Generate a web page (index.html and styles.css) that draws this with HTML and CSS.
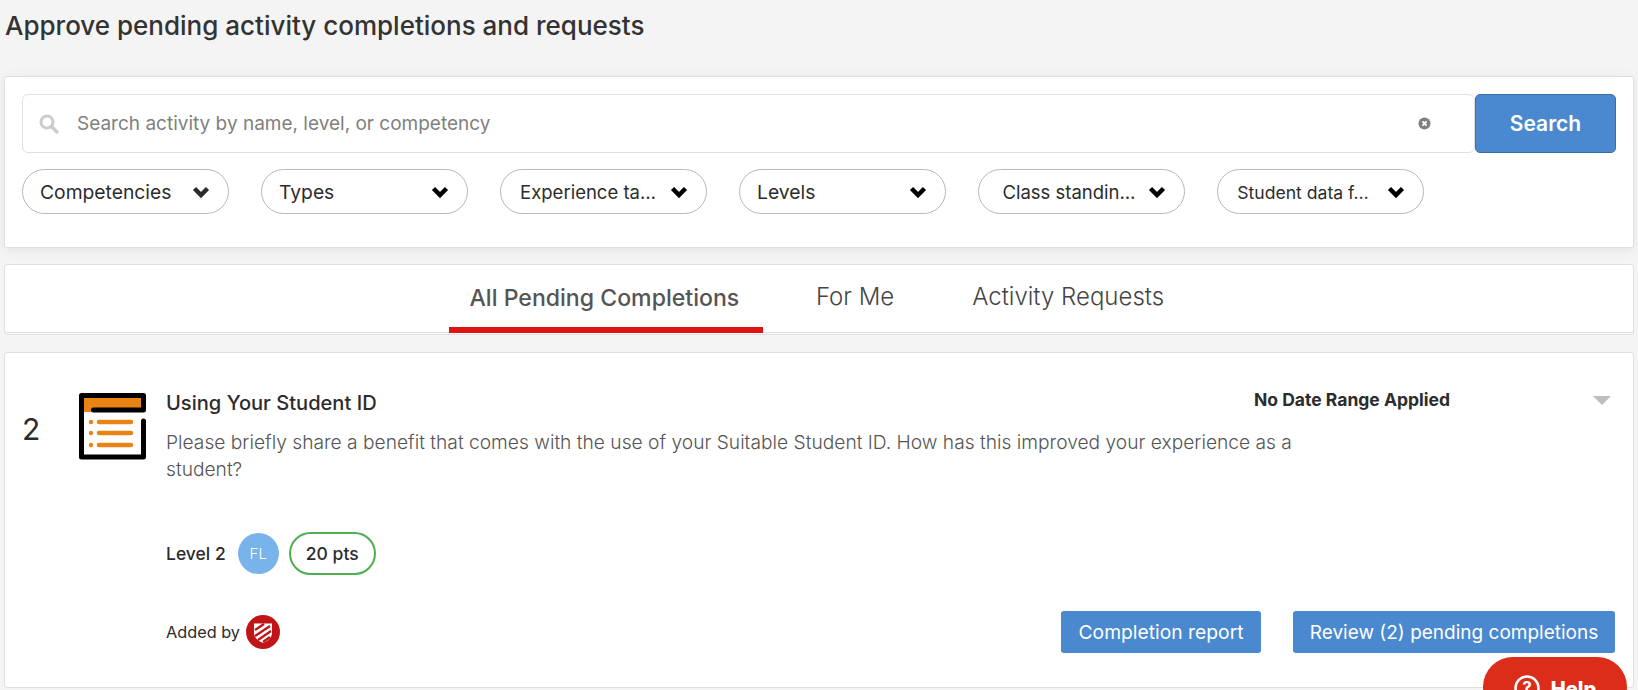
FILE: index.html
```html
<!DOCTYPE html>
<html lang="en">
<head>
<meta charset="utf-8">
<title>Approve pending activity completions and requests</title>
<link rel="stylesheet" href="styles.css">
</head>
<body>
<h1 class="page-title">Approve pending activity completions and requests</h1>
<section class="panel filters">
  <div class="search-row">
    <div class="search-box">
      <svg class="search-icon" viewBox="0 0 20 20"><circle cx="8" cy="8" r="6" fill="none" stroke="#ccc" stroke-width="3"/><path d="M12.5 12.5L18 18" stroke="#ccc" stroke-width="3.4" stroke-linecap="round"/></svg>
      <span class="placeholder">Search activity by name, level, or competency</span>
      <svg class="clear-icon" viewBox="0 0 14 14"><circle cx="7" cy="7" r="6.5" fill="#808080"/><path d="M4.8 4.8l4.4 4.4M9.2 4.8l-4.4 4.4" stroke="#fff" stroke-width="2"/></svg>
    </div>
    <button class="search-btn">Search</button>
  </div>
  <div class="pill-row">
    <div class="pill"><span class="pill-text">Competencies</span><svg class="chev" viewBox="0 0 18 12"><path d="M2.500 2.500L9 9l6.500-6.500" fill="none" stroke="#2b2b2b" stroke-width="4.500"/></svg></div>
    <div class="pill"><span class="pill-text">Types</span><svg class="chev" viewBox="0 0 18 12"><path d="M2.500 2.500L9 9l6.500-6.500" fill="none" stroke="#000" stroke-width="4.500"/></svg></div>
    <div class="pill"><span class="pill-text trunc trunc-left">Experience ta…</span><svg class="chev" viewBox="0 0 18 12"><path d="M2.500 2.500L9 9l6.500-6.500" fill="none" stroke="#000" stroke-width="4.500"/></svg></div>
    <div class="pill"><span class="pill-text">Levels</span><svg class="chev" viewBox="0 0 18 12"><path d="M2.500 2.500L9 9l6.500-6.500" fill="none" stroke="#000" stroke-width="4.500"/></svg></div>
    <div class="pill"><span class="pill-text trunc">Class standin…</span><svg class="chev" viewBox="0 0 18 12"><path d="M2.500 2.500L9 9l6.500-6.500" fill="none" stroke="#000" stroke-width="4.500"/></svg></div>
    <div class="pill"><span class="pill-text trunc trunc-left trunc-small">Student data f…</span><svg class="chev" viewBox="0 0 18 12"><path d="M2.500 2.500L9 9l6.500-6.500" fill="none" stroke="#000" stroke-width="4.500"/></svg></div>
  </div>
</section>
<nav class="panel tabs">
  <div class="tab active">All Pending Completions</div>
  <div class="tab">For Me</div>
  <div class="tab">Activity Requests</div>
</nav>
<section class="panel item">
  <div class="count">2</div>
  <svg class="activity-icon" viewBox="0 0 67 67">
    <path d="M5 5H62V15H13V19H5Z" fill="#ea8316"/>
    <path d="M14.500 17H64.500V2.500H2.500V64H64.500V28" fill="none" stroke="#000" stroke-width="5" stroke-linecap="round" stroke-linejoin="round"/>
    <circle cx="12" cy="29" r="2.200" fill="#ea8316"/><circle cx="12" cy="40" r="2.200" fill="#ea8316"/><circle cx="12" cy="52" r="2.200" fill="#ea8316"/>
    <path d="M20 29H52M20 40H52M20 52H52" stroke="#ea8316" stroke-width="4.500" stroke-linecap="round"/>
  </svg>
  <div class="item-body">
    <div class="item-head">
      <h2 class="item-title">Using Your Student ID</h2>
      <div class="date-range">No Date Range Applied</div>
      <div class="caret"></div>
    </div>
    <p class="item-desc">Please briefly share a benefit that comes with the use of your Suitable Student ID. How has this improved your experience as a student?</p>
    <div class="meta">
      <span class="level">Level 2</span>
      <span class="avatar">FL</span>
      <span class="points">20 pts</span>
    </div>
    <div class="foot">
      <span class="added">Added by</span>
      <svg class="badge" viewBox="0 0 34 34"><circle cx="17" cy="17" r="17" fill="#c01516"/><path d="M8 8.500H26V18C26 23 21 26.500 17 28C13 26.500 8 23 8 18Z" fill="#fff"/><path d="M9 15L18 9M9 21L24 11M12 25L25 16M17 27L24 22" stroke="#c01516" stroke-width="2.200"/></svg>
      <div class="actions">
        <button class="action action-report">Completion report</button>
        <button class="action action-review">Review (2) pending completions</button>
      </div>
    </div>
  </div>
</section>
<div class="help"><svg class="help-icon" viewBox="0 0 26 26"><circle cx="13" cy="13" r="11.500" fill="none" stroke="#fff" stroke-width="2.500"/><text x="13" y="19" text-anchor="middle" class="help-q">?</text></svg><span class="help-label">Help</span></div>
</body>
</html>
```
FILE: styles.css
```css
* { box-sizing: border-box; }
html, body { height: 100%; }
body {
  margin: 0;
  padding: 0 4px;
  background: #f4f4f4;
  font-family: "Inter", "Lato", sans-serif;
  color: #2c2c2c;
  overflow: hidden;
  position: relative;
}
.page-title {
  margin: 0;
  height: 76px;
  padding: 9px 0 0 1px;
  font-size: 26px;
  line-height: 34px;
  font-weight: 500;
  color: #333;
}
.panel {
  background: #fff;
  border: 1px solid #e0e0e0;
  border-radius: 3px;
}
.filters {
  height: 172px;
  padding: 17px 17px 0;
  box-shadow: 0 2px 12px rgba(0,0,0,.07);
  margin-bottom: 16px;
}
.search-row { display: flex; height: 59px; }
.search-box {
  flex: 1;
  display: flex;
  align-items: center;
  border: 1px solid #e0e0e0;
  border-radius: 6px;
  padding: 0 43px 0 16px;
}
.search-icon { width: 20px; height: 20px; margin-right: 18px; }
.placeholder { flex: 1; font-size: 19px; color: #808080; }
.clear-icon { width: 13px; height: 13px; }
.search-btn {
  width: 141px;
  border: 1px solid #3a6ea5;
  border-radius: 5px;
  background: #4a89cf;
  color: #fff;
  font: 600 21px "Inter", sans-serif;
}
.pill-row { display: flex; gap: 32px; margin-top: 16px; }
.pill {
  width: 207px;
  height: 45px;
  display: flex;
  align-items: center;
  justify-content: space-between;
  padding: 1px 18px 0 17px;
  border: 1px solid #b8b8b8;
  border-radius: 23px;
}
.pill-text { font-size: 19.300px; color: #2c2c2c; white-space: nowrap; }
.pill-text.trunc { font-size: 18.500px; flex: 1; text-align: center; padding-right: 6px; }
.pill-text.trunc-left { padding-right: 12px; }
.pill-text.trunc-small { font-size: 17.600px; padding-right: 16px; }
.chev { width: 18px; height: 12px; flex: none; }
.tabs {
  height: 71px;
  display: flex;
  justify-content: center;
  margin-bottom: 17px;
  padding-left: 14px;
  box-shadow: inset 0 -1px 0 #fff, inset 0 -2px 0 #ddd;
}
.tab {
  height: 62px;
  padding: 0 39px;
  display: flex;
  align-items: center;
  justify-content: center;
  font-size: 24px;
  font-weight: 300;
  color: #444;
  white-space: nowrap;
}
.tab.active {
  width: 314px;
  padding: 4px 3px 0 0;
  font-size: 23.100px;
  font-weight: 500;
  color: #555;
  height: 68px;
  border-bottom: 6px solid #dc1414;
  margin-right: 14px;
}
.item {
  height: 336px;
  display: flex;
  align-items: flex-start;
  padding: 37px 17px 0;
}
.count { width: 57px; font-size: 30px; line-height: 36px; margin-top: 21px; }
.activity-icon { width: 67px; height: 67px; flex: none; margin: 3px 20px 0 0; }
.item-body { flex: 1; min-width: 0; }
.item-head { display: flex; align-items: flex-start; height: 26px; }
.item-title { margin: 0; flex: 1; font-size: 20.100px; line-height: 26px; font-weight: 500; color: #2c2c2c; }
.date-range { font-size: 17.500px; line-height: 20px; font-weight: 700; color: #2c2c2c; margin-right: 143px; }
.caret {
  width: 0; height: 0;
  border-left: 9px solid transparent;
  border-right: 9px solid transparent;
  border-top: 9px solid #bdbdbd;
  margin: 6px 5px 0 0;
}
.item-desc {
  margin: 13px 0 0;
  width: 1150px;
  font-size: 19.200px;
  line-height: 27px;
  font-weight: 300;
  color: #555;
}
.meta { display: flex; align-items: center; margin-top: 49px; height: 43px; }
.level { font-size: 17.500px; font-weight: 500; margin-right: 12px; }
.avatar {
  width: 41px; height: 41px; border-radius: 50%;
  background: #78b3ec; color: #fff; font-size: 15px; font-weight: 300;
  display: flex; align-items: center; justify-content: center;
  margin-right: 10px;
}
.points {
  width: 87px; height: 43px; border: 2px solid #4caf50; border-radius: 22px;
  display: flex; align-items: center; justify-content: center;
  font-size: 17.500px; font-weight: 500;
}
.foot { display: flex; align-items: center; margin-top: 36px; height: 42px; }
.added { font-size: 16.300px; margin-right: 6px; }
.badge { width: 34px; height: 34px; }
.actions { margin-left: auto; display: flex; gap: 32px; margin-right: 1px; }
.action {
  height: 42px;
  padding: 0;
  background: #4a89cf;
  border: 0;
  border-radius: 3px;
  color: #fff;
  font: 400 19px "Inter", sans-serif;
}
.action-report { width: 200px; font-size: 19.300px; }
.action-review { width: 322px; }
.help {
  position: absolute;
  left: 1483px;
  top: 657px;
  width: 144px;
  height: 60px;
  border-radius: 30px;
  background: #dc2c1a;
  color: #fff;
  display: flex;
  align-items: flex-start;
  justify-content: center;
  gap: 11px;
  padding-top: 18px;
  font-size: 20px;
  font-weight: 800;
}
.help-icon { width: 26px; height: 26px; }
.help-label { padding-top: 2px; }
.help-q { font: 700 17px "Inter", sans-serif; fill: #fff; }
```
